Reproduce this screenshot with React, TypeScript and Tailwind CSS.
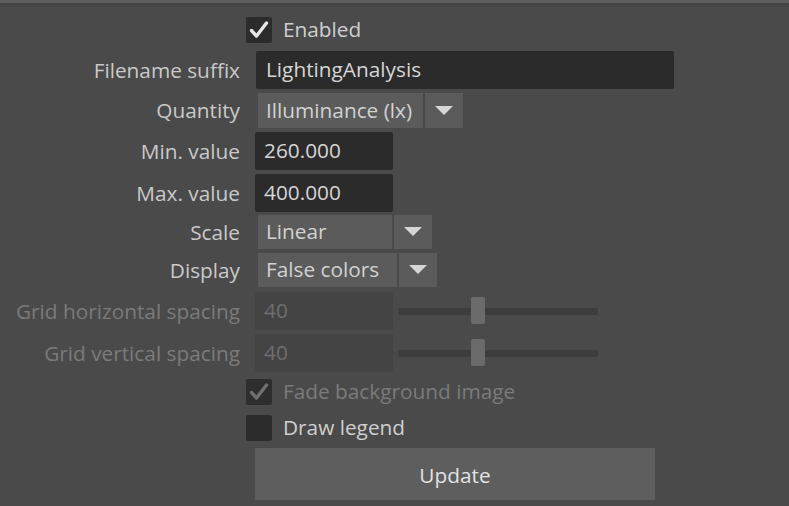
import React from "react";

const font = { fontFamily: '"Open Sans", "Noto Sans", sans-serif' };

function Check({ dim }: { dim?: boolean }) {
  return (
    <svg width="26" height="26" viewBox="0 0 26 26">
      <path
        d="M5.5 13.5 L10.5 19 L20.5 6"
        fill="none"
        stroke={dim ? "#6f6f6f" : "#e6e6e6"}
        strokeWidth="3.4"
        strokeLinecap="round"
        strokeLinejoin="round"
      />
    </svg>
  );
}

function Arrow() {
  return (
    <svg width="18" height="10" viewBox="0 0 18 10">
      <path d="M0 0 L18 0 L9 9 Z" fill="#d6d6d6" />
    </svg>
  );
}

function Label({ children, dim }: { children: React.ReactNode; dim?: boolean }) {
  return (
    <div
      className={`w-[240px] shrink-0 whitespace-nowrap text-right text-[20.8px] leading-none ${
        dim ? "text-[#7b7b7b]" : "text-[#c9c9c9]"
      }`}
    >
      {children}
    </div>
  );
}

function Dropdown({ text, main, arrow }: { text: string; main: string; arrow: string }) {
  return (
    <div className="flex h-full gap-[2px]">
      <div className={`${main} flex h-full items-center whitespace-nowrap bg-[#5b5b5b] pl-[8px] text-[20.8px] text-[#d2d2d2]`}>
        {text}
      </div>
      <div className={`${arrow} flex h-full items-center justify-center bg-[#5b5b5b]`}>
        <Arrow />
      </div>
    </div>
  );
}

function Slider() {
  return (
    <div className="relative ml-[5px] flex h-full w-[200px] items-center">
      <div className="h-[7px] w-full rounded-[2px] bg-[#3d3d3d]" />
      <div className="absolute left-[73px] top-[5px] h-[27px] w-[14px] rounded-[2px] bg-[#6b6b6b]" />
    </div>
  );
}

export default function App() {
  return (
    <div className="h-[506px] w-[789px] overflow-hidden bg-[#4a4a4a]" style={font}>
      <div className="h-[3px] bg-[#5e5e5e]" />
      <div className="h-[4px] bg-[#454545]" />
      <div className="flex flex-col pt-[6px]">
        {/* Enabled */}
        <div className="flex h-[34px] items-center">
          <div className="ml-[246px] flex h-[26px] w-[26px] items-center justify-center rounded-[2px] bg-[#2c2c2c]">
            <Check />
          </div>
          <span className="ml-[11px] text-[20.8px] text-[#cfcfcf]">Enabled</span>
        </div>
        {/* Filename suffix */}
        <div className="mt-[4px] flex h-[38px] items-center gap-[16px]">
          <Label>Filename suffix</Label>
          <div className="flex h-full w-[418px] items-center rounded-[2px] bg-[#2b2b2b] pl-[10px] text-[20.8px] text-[#d6d6d6]">
            LightingAnalysis
          </div>
        </div>
        {/* Quantity */}
        <div className="mt-[4px] flex h-[35px] items-center gap-[18px]">
          <Label>Quantity</Label>
          <Dropdown text="Illuminance (lx)" main="w-[165px]" arrow="w-[38px]" />
        </div>
        {/* Min */}
        <div className="mt-[4px] flex h-[38px] items-center gap-[15px]">
          <Label>Min. value</Label>
          <div className="flex h-full w-[138px] items-center rounded-[2px] bg-[#2b2b2b] pl-[9px] text-[20.8px] text-[#d6d6d6]">
            260.000
          </div>
        </div>
        {/* Max */}
        <div className="mt-[4px] flex h-[38px] items-center gap-[15px]">
          <Label>Max. value</Label>
          <div className="flex h-full w-[138px] items-center rounded-[2px] bg-[#2b2b2b] pl-[9px] text-[20.8px] text-[#d6d6d6]">
            400.000
          </div>
        </div>
        {/* Scale */}
        <div className="mt-[3px] flex h-[34px] items-center gap-[18px]">
          <Label>Scale</Label>
          <Dropdown text="Linear" main="w-[134px]" arrow="w-[38px]" />
        </div>
        {/* Display */}
        <div className="mt-[4px] flex h-[34px] items-center gap-[18px]">
          <Label>Display</Label>
          <Dropdown text="False colors" main="w-[139px]" arrow="w-[38px]" />
        </div>
        {/* Grid horizontal */}
        <div className="mt-[5px] flex h-[38px] items-center gap-[15px]">
          <Label dim>Grid horizontal spacing</Label>
          <div className="flex h-full items-center">
            <div className="flex h-full w-[138px] items-center rounded-[2px] bg-[#444444] pl-[9px] text-[20.8px] text-[#6f6f6f]">
              40
            </div>
            <Slider />
          </div>
        </div>
        {/* Grid vertical */}
        <div className="mt-[4px] flex h-[38px] items-center gap-[15px]">
          <Label dim>Grid vertical spacing</Label>
          <div className="flex h-full items-center">
            <div className="flex h-full w-[138px] items-center rounded-[2px] bg-[#444444] pl-[9px] text-[20.8px] text-[#6f6f6f]">
              40
            </div>
            <Slider />
          </div>
        </div>
        {/* Fade */}
        <div className="mt-[3px] flex h-[34px] items-center">
          <div className="ml-[246px] flex h-[26px] w-[26px] items-center justify-center rounded-[2px] bg-[#2e2e2e]">
            <Check dim />
          </div>
          <span className="ml-[11px] text-[20.8px] text-[#7b7b7b]">Fade background image</span>
        </div>
        {/* Draw legend */}
        <div className="mt-[2px] flex h-[34px] items-center">
          <div className="ml-[246px] h-[26px] w-[26px] rounded-[2px] bg-[#2c2c2c]" />
          <span className="ml-[11px] text-[20.8px] text-[#cfcfcf]">Draw legend</span>
        </div>
        {/* Update */}
        <div className="mt-[3px] flex h-[52px]">
          <button className="ml-[255px] flex h-full w-[400px] items-center justify-center bg-[#5e5e5e] pt-[3px] text-[20.8px] text-[#e2e2e2]">
            Update
          </button>
        </div>
      </div>
    </div>
  );
}
